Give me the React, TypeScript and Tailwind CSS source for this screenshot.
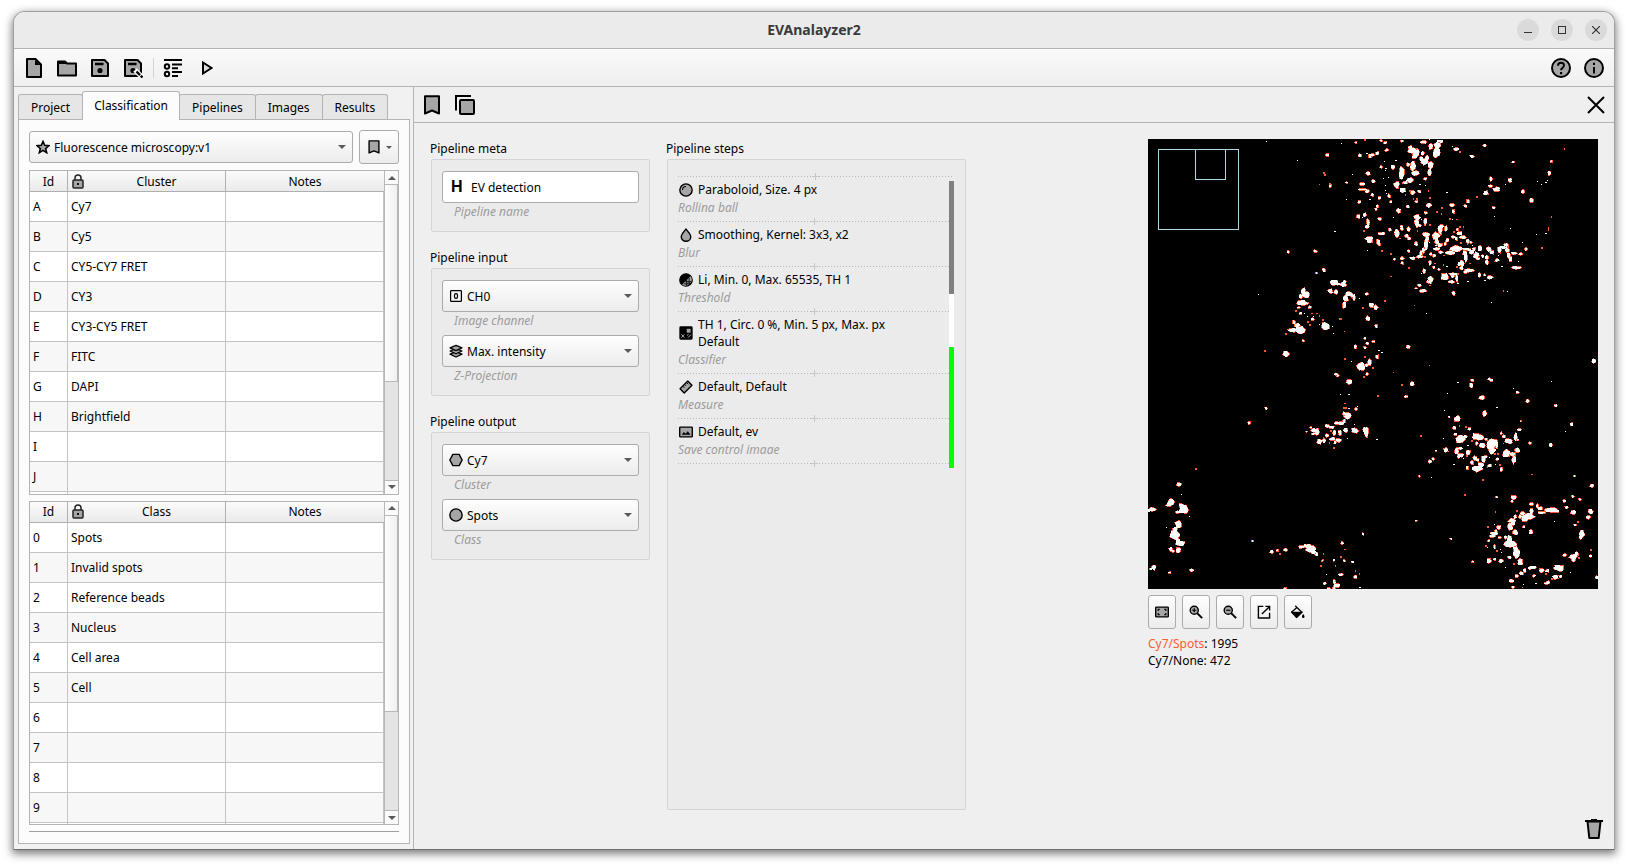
import { useId, useMemo, type ReactNode } from "react";

/* ---------- icons ---------- */

const GREY = "#a6a6a6";

function Icon({ size = "size-5", children }: { size?: string; children: ReactNode }) {
  return (
    <svg viewBox="0 0 20 20" className={`${size} shrink-0`} fill={GREY} stroke="#000" strokeWidth="2" aria-hidden="true">
      {children}
    </svg>
  );
}

const FileIcon = () => (
  <Icon>
    <path d="M3 1h8.500l5.500 5.500V19H3z" strokeLinejoin="round" />
    <path d="M11 1.500V7h5.500z" fill="#000" stroke="none" />
  </Icon>
);
const FolderIcon = () => (
  <Icon>
    <path d="M1 17.500v-14h7l2 2h9v12z" strokeLinejoin="round" />
    <path d="M1 3h7l2 3H1z" fill="#000" stroke="none" />
  </Icon>
);
const SaveBody = () => (
  <>
    <path d="M2 2h12.500L18 5.500V18H2z" strokeLinejoin="round" />
    <path d="M5 6h8.500" strokeWidth="2.400" />
    <circle cx="10" cy="12.500" r="2.600" fill="#000" stroke="none" />
  </>
);
const SaveIcon = () => (
  <Icon>
    <SaveBody />
  </Icon>
);
const SaveAsIcon = () => (
  <Icon>
    <SaveBody />
    <path d="M12 12l8 8" stroke="#f4f4f4" strokeWidth="5" />
    <path d="M13.500 13.500l6 6" strokeWidth="2.400" strokeDasharray="5 1 3" />
  </Icon>
);
const ListIcon = () => (
  <Icon>
    <path d="M1 2h18M9 6.500h10M9 10.200h6M9 14h10M9 18h6" strokeWidth="2" />
    <circle cx="4" cy="8.500" r="2.200" fill="#f4f4f4" />
    <circle cx="4" cy="16" r="2.200" fill="#f4f4f4" />
  </Icon>
);
const PlayIcon = () => (
  <Icon>
    <path d="M7 4.500v11l8.500-5.500z" fill="#ddd" />
  </Icon>
);
const HelpIcon = () => (
  <Icon>
    <circle cx="10" cy="10" r="9" />
    <path d="M7 7.800c0-4 6-4 6-.4 0 2.300-2.900 2.400-2.900 4.900" fill="none" />
    <path d="M9 14h2.200v2.200H9z" fill="#000" stroke="none" />
  </Icon>
);
const InfoIcon = () => (
  <Icon>
    <circle cx="10" cy="10" r="9" />
    <path d="M10 9v6.500M10 4.800v2.200" fill="none" />
  </Icon>
);
const BookmarkIcon = ({ size }: { size?: string }) => (
  <Icon size={size}>
    <path d="M3 1.200h14v17.300l-7-3-7 3z" strokeLinejoin="round" />
  </Icon>
);
const CopyIcon = () => (
  <Icon>
    <path d="M1 15.500V1h15" fill="none" />
    <rect x="5" y="5" width="14" height="14" rx="1" />
  </Icon>
);
const CloseIcon = () => (
  <Icon>
    <path d="M2 2l16 16M18 2L2 18" />
  </Icon>
);
const TrashIcon = () => (
  <Icon>
    <path d="M1 2h18M7 1h6" fill="none" />
    <path d="M3.500 2.500h13L14.700 19H5.300z" strokeLinejoin="round" />
  </Icon>
);
const StarIcon = () => (
  <Icon size="size-[14px]">
    <path d="M10 2l2.400 5.700 6.100.5-4.700 4 1.500 6-5.300-3.300-5.300 3.300 1.500-6-4.700-4 6.100-.5z" strokeWidth="2.200" />
  </Icon>
);
const LockIcon = () => (
  <svg viewBox="0 0 12 15" className="h-[15px] w-3" fill={GREY} stroke="#222" strokeWidth="1.500" aria-hidden="true">
    <path d="M3 6V4a3 3 0 0 1 6 0v2" fill="none" />
    <rect x="1" y="6" width="10" height="8" rx="1" />
    <path d="M5 9h2v2H5z" fill="#111" stroke="none" />
  </svg>
);
const ChannelIcon = () => (
  <Icon size="size-3">
    <rect x="1" y="1" width="18" height="18" rx="1" fill="#f3f3f3" />
    <rect x="7.600" y="6" width="4.800" height="8" rx="1.800" fill="none" />
  </Icon>
);
const LayersIcon = () => (
  <Icon size="size-[14px]">
    <g strokeWidth="1.800" strokeLinejoin="round">
      <path d="M1.500 14.500L10 11l8.500 3.500L10 18.500z" />
      <path d="M1.500 10L10 6.500l8.500 3.500L10 14z" />
      <path d="M1.500 5.500L10 2l8.500 3.500L10 9.500z" />
    </g>
  </Icon>
);
const HexagonIcon = () => (
  <Icon size="size-[14px]">
    <path d="M5.500 2h9l4.300 8-4.300 8h-9l-4.300-8z" strokeLinejoin="round" />
  </Icon>
);
const CircleIcon = () => (
  <Icon size="size-[14px]">
    <circle cx="10" cy="10" r="8.800" />
  </Icon>
);
const BallIcon = () => (
  <Icon size="size-[14px]">
    <circle cx="10" cy="10" r="8.800" />
    <path d="M5 10a5 5 0 0 1 5-5" fill="none" strokeWidth="1.500" />
  </Icon>
);
const DropIcon = () => (
  <Icon size="size-[14px]">
    <path d="M10 1.500c3 4 6.800 7.300 6.800 11a6.800 6.500 0 0 1-13.600 0c0-3.700 3.800-7 6.800-11z" />
  </Icon>
);
const ThresholdIcon = () => (
  <Icon size="size-[14px]">
    <circle cx="10" cy="10" r="8.800" fill="#000" />
    <path d="M16.500 4.500L4.500 16.500a8 8 0 0 0 11-1 8 8 0 0 0 1-11z" stroke="none" />
    <path d="M9 12.500h9M7 15.500h9M11 10v8M14.500 7v9" strokeWidth="1.300" />
  </Icon>
);
const ClassifierIcon = () => (
  <Icon size="size-[14px]">
    <rect x="1.500" y="1.500" width="17" height="17" rx="1" fill="#000" />
    <path d="M11 4h5.500v5.500H11z" stroke="none" />
    <path d="M3.500 12l4 4.500M7.500 12l-4 4.500M11.500 13.500l2-1.500M13 16.500l4-4" stroke="#bbb" strokeWidth="1.400" />
  </Icon>
);
const RulerIcon = () => (
  <Icon size="size-[14px]">
    <path d="M1.500 12.500l11-11 6 6-11 11z" strokeLinejoin="round" />
    <path d="M5.500 9l2.300 2.300M8.200 6.500l2 2M11 3.800l2.300 2.300" strokeWidth="1.400" />
  </Icon>
);
const ImageIcon = () => (
  <Icon size="size-[14px]">
    <rect x="1" y="3" width="18" height="14" rx="1" />
    <path d="M4 14l3-4 2.500 2.500L12.500 9l4 5z" fill="#000" stroke="none" />
  </Icon>
);
const FitIcon = () => (
  <Icon size="size-[14px]">
    <rect x="1" y="3" width="18" height="14" rx="1" />
    <path d="M4.500 8.500V6H7M13 6h2.500v2.500M15.500 11.500V14H13M7 14H4.500v-2.500" fill="none" strokeWidth="1.600" />
  </Icon>
);
const ZoomIcon = ({ plus }: { plus?: boolean }) => (
  <Icon size="size-[14px]">
    <circle cx="7.500" cy="7.500" r="5.800" />
    <path d="M11.800 11.800l7 7" strokeWidth="2.600" />
    <path d={plus ? "M4.500 7.500h6M7.500 4.500v6" : "M4.500 7.500h6"} strokeWidth="1.700" />
  </Icon>
);
const OpenIcon = () => (
  <Icon size="size-[14px]">
    <path d="M9 2H2v16.500h16V11" fill="none" />
    <path d="M12 2h6v6M18 2L7 13" fill="none" />
  </Icon>
);
const BucketIcon = () => (
  <Icon size="size-[14px]">
    <path d="M6 1l9.500 9.500-7.500 7-7-7.500 7.500-6.500" fill="#f4f4f4" strokeWidth="1.800" />
    <path d="M1.500 10.500h13.500l-7 7z" fill="#000" />
    <path d="M17.500 13c1.200 1.800 1.800 2.800 1.800 3.700a1.800 1.800 0 0 1-3.600 0c0-.9.600-1.900 1.800-3.700z" fill="#000" stroke="none" />
  </Icon>
);

function Arrow({ small, up }: { small?: boolean; up?: boolean }) {
  return (
    <svg viewBox="0 0 8 4" className={small ? "h-[3px] w-[6px]" : "h-1 w-2"} fill="#5a5a5a" aria-hidden="true">
      <path d={up ? "M0 4h8L4 0z" : "M0 0h8L4 4z"} />
    </svg>
  );
}

/* ---------- shared controls ---------- */

function ToolButton({ label, children }: { label: string; children: ReactNode }) {
  return (
    <button type="button" aria-label={label} className="flex size-8 shrink-0 items-center justify-center">
      {children}
    </button>
  );
}

const raised = "rounded-[3px] border border-[#ababab] bg-linear-to-b from-[#fefefe] to-[#ececec]";

function Combo({ label, value, icon }: { label: string; value: string; icon: ReactNode }) {
  return (
    <div className="relative h-8">
      <select aria-label={label} className={`${raised} h-8 w-full appearance-none pl-6`}>
        <option>{value}</option>
      </select>
      <span className="pointer-events-none absolute inset-y-0 left-[7px] flex w-[14px] items-center justify-center">{icon}</span>
      <span className="pointer-events-none absolute inset-y-0 right-[7px] flex items-center">
        <Arrow />
      </span>
    </div>
  );
}

/* ---------- left panel ---------- */

function Scrollbar() {
  return (
    <div className="flex w-[14px] shrink-0 flex-col border-l border-[#b8b8b8] bg-[#e4e4e4]" aria-hidden="true">
      <div className="flex h-[14px] items-center justify-center border-b border-[#b8b8b8] bg-[#fbfbfb]">
        <Arrow up />
      </div>
      <div className="flex-[2] border-r border-b border-[#b8b8b8] bg-linear-to-r from-[#fdfdfd] to-[#f0f0f0]" />
      <div className="flex-[1]" />
      <div className="flex h-[14px] items-center justify-center border-t border-[#b8b8b8] bg-[#fbfbfb]">
        <Arrow />
      </div>
    </div>
  );
}

function NameTable({ title, rows }: { title: string; rows: [string, string][] }) {
  const head = "h-[21px] border-b border-[#b0b0b0] bg-linear-to-b from-[#fbfbfb] to-[#eaeaea] p-0 font-normal";
  const cell = "h-[30px] border-r border-b border-[#c4c4c4] p-0 pl-[3px]";
  return (
    <div className="flex min-h-0 flex-1 border border-[#b4b4b4] bg-white">
      <div className="min-w-0 flex-1 overflow-hidden">
        <table className="w-full table-fixed border-separate border-spacing-0">
          <colgroup>
            <col className="w-[38px]" />
            <col />
            <col />
          </colgroup>
          <thead>
            <tr>
              <th className={`${head} border-r`}>Id</th>
              <th className={`${head} border-r`}>
                <span className="relative flex items-center justify-center">
                  <span className="absolute left-1">
                    <LockIcon />
                  </span>
                  <span className="pl-5">{title}</span>
                </span>
              </th>
              <th className={head}>Notes</th>
            </tr>
          </thead>
          <tbody>
            {rows.map(([id, name], i) => (
              <tr key={i} className="even:bg-[#f7f7f7]">
                <td className={cell}>{id}</td>
                <td className={cell}>{name}</td>
                <td className={cell} />
              </tr>
            ))}
          </tbody>
        </table>
      </div>
      <Scrollbar />
    </div>
  );
}

const clusters: [string, string][] = [
  ["A", "Cy7"],
  ["B", "Cy5"],
  ["C", "CY5-CY7 FRET"],
  ["D", "CY3"],
  ["E", "CY3-CY5 FRET"],
  ["F", "FITC"],
  ["G", "DAPI"],
  ["H", "Brightfield"],
  ["I", ""],
  ["J", ""],
  ["", ""],
];

const classes: [string, string][] = [
  ["0", "Spots"],
  ["1", "Invalid spots"],
  ["2", "Reference beads"],
  ["3", "Nucleus"],
  ["4", "Cell area"],
  ["5", "Cell"],
  ["6", ""],
  ["7", ""],
  ["8", ""],
  ["9", ""],
  ["", ""],
];

const tabs = ["Project", "Classification", "Pipelines", "Images", "Results"];

function LeftPanel() {
  return (
    <aside className="flex w-[400px] shrink-0 flex-col border-r border-[#b4b4b4] bg-[#f1f1f1] pt-[5px] pr-[3px] pb-[5px] pl-1">
      <div role="tablist" className="flex h-[27px] items-end">
        {tabs.map((tab, i) =>
          tab === "Classification" ? (
            <button
              key={tab}
              type="button"
              role="tab"
              aria-selected="true"
              className="relative z-10 -mb-px -ml-px h-[29px] rounded-t-[3px] border border-b-0 border-[#b4b4b4] bg-[#fcfcfc] px-[11px] pb-px"
            >
              {tab}
            </button>
          ) : (
            <button
              key={tab}
              type="button"
              role="tab"
              aria-selected="false"
              className={`${i > 0 ? "-ml-px" : ""} h-[25px] rounded-t-[3px] border border-b-0 border-[#b4b4b4] bg-[#e6e6e6] px-3`}
            >
              {tab}
            </button>
          ),
        )}
      </div>
      <div className="flex min-h-0 flex-1 flex-col border border-[#b4b4b4] bg-[#fcfcfc] px-[10px] pt-[10px] pb-[11px]">
        <div className="flex items-center gap-[6px]">
          <div className="flex-1">
            <Combo label="Classification template" value="Fluorescence microscopy:v1" icon={<StarIcon />} />
          </div>
          <button type="button" aria-label="Templates" className={`${raised} flex h-[34px] w-10 items-center justify-center gap-[5px]`}>
            <BookmarkIcon size="size-[14px]" />
            <Arrow small />
          </button>
        </div>
        <div className="mt-[6px] flex min-h-0 flex-1 flex-col gap-[6px]">
          <NameTable title="Cluster" rows={clusters} />
          <NameTable title="Class" rows={classes} />
        </div>
        <hr className="mt-[6px] border-[#a0a0a0]" />
      </div>
    </aside>
  );
}

/* ---------- pipeline settings ---------- */

const box = "rounded-[2px] border border-[#d4d4d4] bg-[#ebebeb]";

function Group({ title, children }: { title: string; children: ReactNode }) {
  return (
    <section>
      <h2 className="-ml-px h-5 leading-5">{title}</h2>
      <div className={`${box} px-[10px] pt-[11px] pb-[5px]`}>{children}</div>
    </section>
  );
}

const Caption = ({ children }: { children: ReactNode }) => <p className="mb-[6px] pl-3 text-[#9c9c9c] italic">{children}</p>;

function Field({ label, value, icon }: { label: string; value: string; icon: ReactNode }) {
  return (
    <div>
      <Combo label={label} value={value} icon={icon} />
      <Caption>{label}</Caption>
    </div>
  );
}

function Settings() {
  const id = useId();
  return (
    <div className="flex w-[219px] shrink-0 flex-col gap-4">
      <Group title="Pipeline meta">
        <div className="relative h-8">
          <input
            id={id}
            type="text"
            defaultValue="EV detection"
            className="h-8 w-full rounded-[3px] border border-[#ababab] bg-white pl-7"
          />
          <span aria-hidden="true" className="absolute inset-y-0 left-[9px] flex items-center font-['Liberation_Sans'] text-base font-bold">
            H
          </span>
        </div>
        <label htmlFor={id}>
          <Caption>Pipeline name</Caption>
        </label>
      </Group>
      <Group title="Pipeline input">
        <Field label="Image channel" value="CH0" icon={<ChannelIcon />} />
        <Field label="Z-Projection" value="Max. intensity" icon={<LayersIcon />} />
      </Group>
      <Group title="Pipeline output">
        <Field label="Cluster" value="Cy7" icon={<HexagonIcon />} />
        <Field label="Class" value="Spots" icon={<CircleIcon />} />
      </Group>
    </div>
  );
}

/* ---------- pipeline steps ---------- */

const steps: { icon: ReactNode; lines: string[]; kind: string }[] = [
  { icon: <BallIcon />, lines: ["Paraboloid, Size. 4 px"], kind: "Rolling ball" },
  { icon: <DropIcon />, lines: ["Smoothing, Kernel: 3x3, x2"], kind: "Blur" },
  { icon: <ThresholdIcon />, lines: ["Li, Min. 0, Max. 65535, TH 1"], kind: "Threshold" },
  { icon: <ClassifierIcon />, lines: ["TH 1, Circ. 0 %, Min. 5 px, Max. px", "Default"], kind: "Classifier" },
  { icon: <RulerIcon />, lines: ["Default, Default"], kind: "Measure" },
  { icon: <ImageIcon />, lines: ["Default, ev"], kind: "Save control image" },
];

function InsertLine() {
  return (
    <svg className="-my-[3px] h-[7px] w-full" aria-hidden="true" shapeRendering="crispEdges">
      <line x1="0" x2="100%" y1="3.500" y2="3.500" stroke="#b8b8b8" strokeDasharray="1 2" />
      <svg x="50%" overflow="visible">
        <path d="M-3 3.500h7M.5 0v7" stroke="#c4c8ca" />
      </svg>
    </svg>
  );
}

function Steps() {
  return (
    <section className="flex w-[299px] shrink-0 flex-col">
      <h2 className="-ml-px h-5 leading-5">Pipeline steps</h2>
      <div className={`${box} flex-1 px-[10px] pt-4`}>
        <div className="pr-[3px]">
          <InsertLine />
        </div>
        <div className="flex">
          <ol className="flex-1 pb-1">
            {steps.map((s) => (
              <li key={s.kind} className="pt-1">
                <div className="flex items-center gap-[5px] pl-px">
                  {s.icon}
                  <div>
                    {s.lines.map((l) => (
                      <p key={l}>{l}</p>
                    ))}
                  </div>
                </div>
                <p className="mt-px mb-[9px] h-[13px] overflow-hidden text-[#9c9c9c] italic">{s.kind}</p>
                <InsertLine />
              </li>
            ))}
          </ol>
          <div className="mt-1 mr-px flex w-[5px] flex-col" aria-hidden="true">
            <div className="flex-[113] bg-[#808080]" />
            <div className="flex-[53] bg-white" />
            <div className="flex-[121] bg-[#00ff00]" />
          </div>
        </div>
      </div>
    </section>
  );
}

/* ---------- microscope preview ---------- */

/* Each tile is given at three units per pixel: spots are "x y w h", dots and embers are "x y". */
type Tile = { x: number; y: number; spots: string; dots: string; embers: string };

const tiles: Tile[] = [
  {
    x: -8,
    y: -9,
    spots: "562 76 10 8;571 168 7 9;445 366 7 8;525 364 10 8",
    dots: "379 34;472 90;585 304",
    embers: "551 129;554 134;538 163;569 161",
  },
  {
    x: 192,
    y: -9,
    spots:
      "48 37 6 5;60 76 9 9;96 75 18 8;90 80 8 8;112 70 8 9;123 32 8 5;135 38 9 7;140 60 9 8;186 33 9 5;84 130 12 10;100 154 10 10;67 162 18 9;70 179 26 6;82 184 12 9;97 194 7 9;58 216 8 7;20 158 9 4;55 260 8 11;74 254 8 10;84 277 9 20;82 290 12 8;88 325 24 10;90 333 14 12;114 335 10 14;118 344 7 7;125 311 18 7;119 267 9 7;119 204 9 8;147 198 8 10;112 229 7 10;108 238 6 6;176 242 12 12;152 215 8 6;124 111 8 8;158 111 11 12;150 299 8 8;163 388 7 6;" +
      "185 130 14 34;170 165 16 20;188 180 18 14;210 150 20 14;196 158 14 8;204 104 8 9;217 62 24 16;225 78 16 16;212 53 12 10;232 68 10 24;249 70 10 10;219 108 14 24;225 130 22 14;253 94 20 18;244 86 10 12;261 83 10 12;252 36 18 8;272 50 10 18;289 68 20 26;292 46 18 20;300 34 16 8;273 106 14 22;268 128 12 18;256 146 8 8;218 188 12 14;238 184 10 8;229 215 8 6;203 229 10 8;267 226 14 11;258 248 9 7;" +
      "231 262 18 14;230 278 12 26;256 276 8 20;239 287 8 8;206 298 9 12;185 296 10 10;170 310 14 20;200 318 12 10;207 325 9 10;184 290 7 8;228 341 10 12;258 314 20 12;262 326 8 20;258 345 10 30;250 362 9 14;206 363 7 7;186 385 10 10;187 399 7 7;218 385 16 8;238 380 18 10;243 370 8 14;" +
      "288 318 20 22;300 300 12 24;303 290 16 10;318 295 8 14;290 336 12 12;300 345 12 10;322 330 8 12;316 341 7 9;290 357 22 8;302 367 12 8;282 377 9 9;270 398 7 13;281 412 7 9;252 423 8 14;272 372 7 7;340 321 10 8;349 326 8 10;352 298 7 9;358 310 16 12;368 322 18 9;384 333 8 14;392 337 8 6;" +
      "350 356 36 18;330 369 26 12;380 358 28 7;375 370 12 16;378 384 10 24;365 400 12 20;358 402 9 12;364 415 9 9;386 421 28 10;377 427 10 7;396 366 14 12;408 376 15 18;402 358 9 9;420 355 12 16;414 386 10 7;428 378 8 8;440 382 10 10;441 397 9 14;447 358 14 12;456 367 14 9;471 391 10 9;478 360 10 18;490 352 20 9;498 345 14 10;502 360 10 14;506 376 10 14;512 388 9 14;522 370 18 6;542 372 10 7;558 357 8 8;529 413 24 8;" +
      "314 440 22 18;340 432 28 6;350 444 8 20;334 455 16 8;338 438 10 10;418 435 7 12;434 435 6 6;450 442 16 9;341 490 9 10;272 447 16 14;264 455 8 8;238 466 10 7;250 482 20 9;270 454 8 14;297 418 7 6;228 475 7 4;" +
      "340 244 7 12;336 226 14 9;384 214 9 12;376 228 9 7;348 58 16 8;396 79 11 8;434 47 10 8;520 96 8 6;634 94 6 6;628 129 9 12;453 147 8 11;451 168 12 7;438 189 14 12;470 178 18 12;510 151 11 12;549 184 9 10;574 210 10 14;462 233 8 6;" +
      "10 464 17 12;14 455 8 8;27 492 22 14;17 505 14 18;12 525 10 20;42 502 8 16;35 495 8 10;81 492 9 7;94 526 14 13;107 532 12 12;83 566 10 13;109 588 8 9;75 625 6 6;81 640 8 6;100 635 8 4;74 653 7 6;46 650 7 10;112 681 8 11;88 697 10 18;80 705 8 8;62 709 22 22;204 651 9 8;762 693 12 12",
    dots: "4 39;37 133;19 207;133 94;130 146;138 115;137 122;137 165;139 190;168 90;83 362;81 70;68 262;240 163;257 166;321 186;337 48;269 29;260 550;454 516;463 260;496 163;512 295;547 338;589 313;618 310;592 155;618 157;605 163;622 151;502 485;384 454;435 450;535 394;486 409;354 460;59 505;118 661;126 668;35 694;268 338;145 143;136 182;90 207;160 263;337 268;244 430;398 346;475 376;244 267;321 410;288 347",
    embers:
      "134 512;153 371;126 362;72 302;210 183;220 206;196 195;265 182;270 203;290 246;306 234;304 252;329 267;350 268;270 284;359 291;370 291;153 439;207 413;223 526;410 201;360 66;673 57;634 261;625 294;625 300;606 353;490 483;270 466;284 400;342 306;362 338;232 302;180 325;246 100;230 206;268 706;68 534;3 567;13 604;15 686;97 714;75 29;255 380;312 376;350 410;390 400;310 405",
  },
  {
    x: -8,
    y: 121,
    spots:
      "552 30 9 8;529 39 6 5;490 96 14 24;499 105 16 18;482 109 10 14;485 129 34 14;476 143 8 6;510 142 9 8;482 160 9 7;582 67 22 16;594 72 14 6;571 93 14 12;588 96 11 12;462 186 9 12;472 196 16 12;480 210 28 20;458 211 24 10;518 178 8 7;557 199 24 23;490 242 7 6;438 281 18 16;378 445 7 8;328 489 8 8;" +
      "588 343 9 6;593 347 7 6;520 510 14 10;531 517 14 20;520 522 10 7;500 515 5 4;512 502 6 5;562 498 14 9;574 502 16 8;589 489 14 7;603 490 16 10;612 483 10 9;624 467 22 18;612 462 10 10;583 518 9 14;600 518 10 14;617 510 12 11;645 513 18 12;640 508 10 8;561 526 10 9;552 542 10 12;538 545 14 14;578 537 18 10;596 541 14 10;585 548 6 8;648 447 9 7;628 366 16 14;" +
      "117 673 14 10;92 727 18 20;85 735 12 7;132 748 26 22;124 738 12 16;113 756 14 8;36 748 20 10;26 752 8 8;116 792 18 24;106 808 14 14;104 825 26 30;114 845 10 20;122 850 26 12;116 870 14 16;93 868 10 12;100 874 8 8;41 922 10 14;33 927 6 5;155 931 10 8;89 938 7 5;" +
      "338 843 5 4;395 875 9 9;412 871 7 6;437 869 11 8;484 861 16 8;502 858 22 10;512 867 26 18;520 876 14 12;530 882 7 10;607 849 9 8;638 906 8 6;602 944 14 7;646 951 10 9;590 976 20 12;583 966 8 12;582 984 8 6;554 970 9 7;566 985 8 4;436 985 8 4;547 902 6 5;613 902 6 6;582 900 5 5",
    dots: "355 102;539 194;580 220;577 199;493 160;502 169;520 168;124 702;148 769;79 802;644 493;622 535;602 404;627 404;652 438;660 982;710 538;560 942;612 510;627 446",
    embers:
      "468 152;515 160;531 160;538 167;548 179;504 185;510 194;600 177;613 214;438 221;374 273;168 626;614 430;618 444;612 444;568 548;582 563;420 882;550 882;543 918;586 918;603 891;615 868;669 822;646 933;658 941;604 538;572 512",
  },
  {
    x: 212,
    y: 201,
    spots:
      "22 10 8 8;15 22 7 6;40 5 9 5;51 50 8 10;29 66 9 16;5 80 16 22;21 102 7 8;145 20 9 8;157 131 11 12;138 170 9 6;337 121 8 7;334 136 10 12;388 117 8 6;394 121 9 7;365 173 14 12;374 221 12 15;472 157 8 7;503 183 11 9;587 197 9 7;635 252 8 9;510 310 9 7;572 315 8 10;702 63 11 10;478 269 11 7;467 290 10 20;473 300 6 5;483 243 5 4;" +
      "291 236 16 15;282 263 10 9;286 282 9 7;302 298 30 22;328 267 9 8;350 290 26 20;362 293 18 14;378 298 10 6;395 310 26 26;396 330 20 24;390 322 18 14;410 316 7 18;367 316 16 14;408 310 8 20;350 310 7 12;" +
      "258 329 12 13;300 325 16 8;290 333 10 18;302 346 18 10;296 350 8 8;324 337 12 14;316 290 10 8;344 354 12 12;352 360 9 8;370 358 12 16;363 375 16 16;352 386 26 18;336 368 9 12;322 383 7 9;388 377 12 9;412 357 9 8;376 350 12 7;424 388 8 12;424 280 6 8;432 290 10 8;444 302 22 12;450 307 10 10;440 338 22 18;458 343 20 10;473 331 14 12;462 358 11 22;438 346 20 8;466 290 8 12;" +
      "210 364 10 8;220 357 9 7;178 409 5 6;228 332 5 4;267 231 5 4;411 471 6 4;18 276 12 30;13 270 8 14;643 408 8 5;696 437 11 9;638 469 7 7;659 478 7 6;461 473 14 14;456 484 8 7;514 492 12 8;532 498 7 14;540 505 14 9;575 510 38 12;545 518 26 6;588 514 16 7;613 483 9 9;620 502 9 7;640 517 16 12;692 515 14 14;685 532 11 11;646 555 8 6;514 513 10 16;" +
      "505 530 34 18;494 536 20 18;488 520 14 10;480 530 9 10;456 542 22 12;450 560 16 22;466 578 14 14;460 550 10 10;466 530 9 12;448 600 12 30;452 611 34 18;437 592 10 10;467 628 14 16;470 640 20 26;448 652 10 8;480 662 12 10;480 670 14 9;416 562 12 10;402 580 22 9;396 588 16 8;407 574 8 10;419 592 9 6;404 621 6 10;387 662 12 12;404 658 7 6;423 663 12 10;386 602 6 6;513 578 10 10;512 572 7 6;492 560 7 6;" +
      "665 582 16 20;662 590 10 12;640 650 24 14;641 660 10 10;650 642 10 12;614 645 9 8;692 648 8 7;596 682 28 14;600 688 16 12;562 692 10 9;545 691 14 12;517 682 20 9;510 684 9 8;494 691 8 12;484 700 12 9;470 708 10 8;454 722 12 10;459 742 8 7;522 707 8 7;586 711 16 12;602 709 8 7;563 728 12 9;556 730 8 5;710 712 8 8;273 597 6 4;338 665 6 5;168 542 5 4;9 582 5 6",
    dots: "57 32;67 38;294 128;262 160;254 212;411 203;460 145;574 123;616 274;51 298;214 412;282 373;310 355;250 295;406 373;583 544;631 697;403 553;421 627;424 638;436 681;490 733;528 729;324 317;388 352;2 742;382 622",
    embers:
      "100 97;126 134;54 168;208 76;182 288;369 420;516 403;315 464;406 516;470 512;55 44;15 50;38 84;298 258;318 261;335 303;320 348;414 342;432 347;430 310;384 560;410 632;378 617;693 630;654 545;656 654;462 671;558 702;575 716;487 742;420 374;464 330;404 341;294 322;12 110",
  },
];

const parse = (s: string) => s.split(";").map((item) => item.trim().split(" ").map(Number));

const noise = (a: number, b: number, k: number) => {
  const v = Math.sin(a * 12.9898 + b * 78.233 + k * 37.719) * 43758.5453;
  return v - Math.floor(v);
};

/* Closed irregular outline inside the given bounds. */
function outline([x, y, w, h]: number[]) {
  const large = w + h > 20;
  const n = large ? 11 : 7;
  let d = "";
  for (let k = 0; k < n; k++) {
    const angle = (k / n) * Math.PI * 2;
    const r = (large ? 0.78 : 0.82) + noise(x, y, k) * 0.5;
    d += `${k ? "L" : "M"}${(x + (Math.cos(angle) * w * r) / 2).toFixed(1)} ${(y + (Math.sin(angle) * h * r) / 2).toFixed(1)}`;
  }
  return d + "z";
}

function Preview() {
  const layers = useMemo(
    () =>
      tiles.map((t) => ({
        at: `translate(${t.x} ${t.y}) scale(${1 / 3})`,
        spots: parse(t.spots).map(outline).join(""),
        dots: parse(t.dots).map(([x, y]) => `M${x - 2} ${y - 1}h4v3h-4z`).join(""),
        embers: parse(t.embers).map(([x, y]) => `M${x - 2} ${y - 2}h5v5h-5z`).join(""),
      })),
    [],
  );
  return (
    <svg viewBox="0 0 450 450" className="aspect-square w-full bg-black" shapeRendering="crispEdges" role="img" aria-label="Detected spots">
      {layers.map((l) => (
        <g key={l.at} transform={l.at}>
          <path d={l.embers} fill="#ff5a36" />
          <path d={l.spots} fill="#ff5a36" stroke="#ff5a36" strokeWidth="3" />
        </g>
      ))}
      {layers.map((l) => (
        <g key={l.at} transform={l.at} fill="#fff">
          <path d={l.spots} />
          <path d={l.dots} />
        </g>
      ))}
      <g fill="none" stroke="#add8e6">
        <rect x="10.500" y="10.500" width="80" height="80" />
        <rect x="47.500" y="10.500" width="30" height="30" />
      </g>
    </svg>
  );
}

const previewTools: [string, ReactNode][] = [
  ["Fit to screen", <FitIcon />],
  ["Zoom in", <ZoomIcon plus />],
  ["Zoom out", <ZoomIcon />],
  ["Open in window", <OpenIcon />],
  ["Fill", <BucketIcon />],
];

/* ---------- window ---------- */

const windowButton = "flex size-[22px] items-center justify-center rounded-full bg-[#dadada]";

export default function App() {
  return (
    <div className="flex h-screen bg-white px-[13px] pt-[11px] pb-4 font-['Noto_Sans',sans-serif] text-xs leading-[17px] text-black">
      <div className="flex min-w-0 flex-1 flex-col overflow-hidden rounded-t-xl border border-[#a0a0a0] border-b-[#6e6e6e] bg-[#efefef] shadow-[0_3px_9px_1px_rgba(0,0,0,0.5)]">
        <header className="grid h-[37px] shrink-0 grid-cols-[1fr_auto_1fr] items-center border-b border-[#b4b4b4] bg-[#ebebeb]">
          <span />
          <h1 className="text-sm font-bold text-[#3a3a3a]">EVAnalayzer2</h1>
          <div className="flex justify-end gap-3 pr-[7px]">
            <button type="button" aria-label="Minimize" className={windowButton}>
              <span className="mt-1 h-px w-2 bg-[#333]" />
            </button>
            <button type="button" aria-label="Maximize" className={windowButton}>
              <span className="size-2 border border-[#333]" />
            </button>
            <button type="button" aria-label="Close" className={windowButton}>
              <svg viewBox="0 0 8 8" className="size-2" stroke="#333" strokeWidth="1.200" aria-hidden="true">
                <path d="M0 0l8 8M8 0L0 8" />
              </svg>
            </button>
          </div>
        </header>

        <div className="flex h-[38px] shrink-0 items-center gap-px border-b border-[#b4b4b4] bg-linear-to-b from-[#fafafa] to-[#efefef] px-1">
          <ToolButton label="New">
            <FileIcon />
          </ToolButton>
          <ToolButton label="Open">
            <FolderIcon />
          </ToolButton>
          <ToolButton label="Save">
            <SaveIcon />
          </ToolButton>
          <ToolButton label="Save as">
            <SaveAsIcon />
          </ToolButton>
          <span className="mr-[2px] ml-[3px] h-5 w-px bg-[#d4d4d4]" />
          <ToolButton label="Task list">
            <ListIcon />
          </ToolButton>
          <ToolButton label="Run">
            <PlayIcon />
          </ToolButton>
          <span className="flex-1" />
          <ToolButton label="Help">
            <HelpIcon />
          </ToolButton>
          <ToolButton label="About">
            <InfoIcon />
          </ToolButton>
        </div>

        <div className="flex min-h-0 flex-1">
          <LeftPanel />
          <main className="flex min-w-0 flex-1 flex-col">
            <div className="flex h-9 shrink-0 items-center gap-px border-b border-[#b4b4b4] pr-[2px] pl-[2px]">
              <ToolButton label="Bookmark">
                <BookmarkIcon />
              </ToolButton>
              <ToolButton label="Duplicate">
                <CopyIcon />
              </ToolButton>
              <span className="flex-1" />
              <ToolButton label="Close pipeline">
                <CloseIcon />
              </ToolButton>
            </div>
            <div className="flex min-h-0 flex-1 gap-[17px] pt-4 pr-4 pl-[17px]">
              <Settings />
              <Steps />
              <section className="ml-auto w-[450px] shrink-0">
                <Preview />
                <div className="mt-[6px] flex gap-[6px]">
                  {previewTools.map(([label, icon]) => (
                    <button key={label} type="button" aria-label={label} className={`${raised} flex h-[34px] w-7 items-center justify-center`}>
                      {icon}
                    </button>
                  ))}
                </div>
                <p className="mt-[6px]">
                  <span className="text-[#ff5a36]">Cy7/Spots</span>: 1995
                </p>
                <p>Cy7/None: 472</p>
              </section>
            </div>
            <footer className="flex h-[39px] shrink-0 items-center justify-end pr-1 pb-[2px]">
              <ToolButton label="Delete pipeline">
                <TrashIcon />
              </ToolButton>
            </footer>
          </main>
        </div>
      </div>
    </div>
  );
}
